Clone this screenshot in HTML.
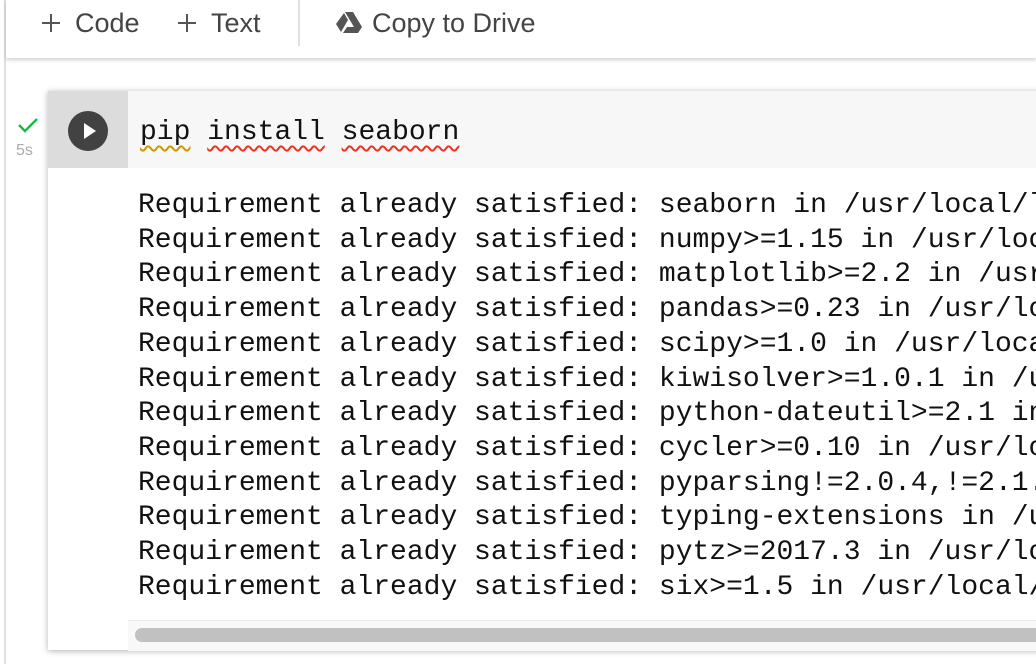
<!DOCTYPE html>
<html><head><style>
body{margin:0;width:1036px;height:664px;overflow:hidden;background:#fff;position:relative;font-family:"Liberation Sans",sans-serif}
.lb{position:absolute;left:4px;top:0;width:2px;height:664px;background:#e0e0e0}
.tb{position:absolute;left:6px;top:0;width:1030px;height:58px;background:#fff;box-shadow:0 2px 4px rgba(0,0,0,.18)}
.tt{position:absolute;top:8px;font-size:27px;color:#444;white-space:nowrap}
.div{position:absolute;left:292px;top:0;width:2px;height:46px;background:#e0e0e0}
.cell{position:absolute;left:48px;top:91px;width:1000px;height:559px;background:#fff;box-shadow:0 1px 6px rgba(0,0,0,.3)}
.gut{position:absolute;left:0;top:0;width:80px;height:77px;background:#dcdcdc}
.code{position:absolute;left:80px;top:0;width:920px;height:77px;background:#f7f7f7}
.run{position:absolute;left:20px;top:20px;width:40px;height:40px;border-radius:50%;background:#424242}
.mono{font-family:"Liberation Mono",monospace;font-size:28px;color:#111;white-space:pre}
.out{position:absolute;left:90px;top:98px;line-height:34.7px}
.sq{text-decoration:underline wavy #e32;text-underline-offset:6px;text-decoration-thickness:1.5px}
.track{position:absolute;left:80px;top:529px;width:920px;height:30px;background:#f8f8f8;border-top:1px solid #e8e8e8}
.thumb{position:absolute;left:87px;top:537px;width:913px;height:14px;border-radius:7px;background:#c1c1c1}
</style></head><body>
<div class="lb"></div>
<div class="tb">
<svg style="position:absolute;left:36px;top:14px" width="18" height="18"><path d="M9 0v18M0 9h18" stroke="#555" stroke-width="2"/></svg>
<div class="tt" style="left:69px">Code</div>
<svg style="position:absolute;left:172px;top:14px" width="18" height="18"><path d="M9 0v18M0 9h18" stroke="#555" stroke-width="2"/></svg>
<div class="tt" style="left:205px">Text</div>
<div class="div"></div>
<svg style="position:absolute;left:330px;top:12px" width="26" height="23" viewBox="0 0 26 23"><path d="M9 0h8l9 15h-8z" fill="#555"/><path d="M8 1l4 7-7 12-5-8z" fill="#555"/><path d="M7 21l4-6h15l-4 6z" fill="#555"/></svg>
<div class="tt" style="left:366px">Copy to Drive</div>
</div>
<svg style="position:absolute;left:17px;top:117px" width="22" height="16" viewBox="0 0 22 16"><path d="M2 8l6 6L20 2" stroke="#1bb847" stroke-width="2.4" fill="none"/></svg>
<div style="position:absolute;left:16px;top:142px;font-size:16px;color:#aaa">5s</div>
<div class="cell">
<div class="gut"><div class="run"><svg width="40" height="40"><path d="M16 12l12 8-12 8z" fill="#fff"/></svg></div></div>
<div class="code"><div class="mono" style="position:absolute;left:12px;top:26px"><span style="text-decoration:underline wavy #c90;text-underline-offset:6px;text-decoration-thickness:1.5px">pip</span> <span class="sq">install</span> <span class="sq">seaborn</span></div></div>
<div class="mono out">Requirement already satisfied: seaborn in /usr/local/l
Requirement already satisfied: numpy>=1.15 in /usr/loc
Requirement already satisfied: matplotlib>=2.2 in /usr
Requirement already satisfied: pandas>=0.23 in /usr/lo
Requirement already satisfied: scipy>=1.0 in /usr/loca
Requirement already satisfied: kiwisolver>=1.0.1 in /u
Requirement already satisfied: python-dateutil>=2.1 in
Requirement already satisfied: cycler>=0.10 in /usr/lo
Requirement already satisfied: pyparsing!=2.0.4,!=2.1.
Requirement already satisfied: typing-extensions in /u
Requirement already satisfied: pytz>=2017.3 in /usr/lo
Requirement already satisfied: six>=1.5 in /usr/local/</div>
<div class="track"></div>
<div class="thumb"></div>
</div>
</body></html>
